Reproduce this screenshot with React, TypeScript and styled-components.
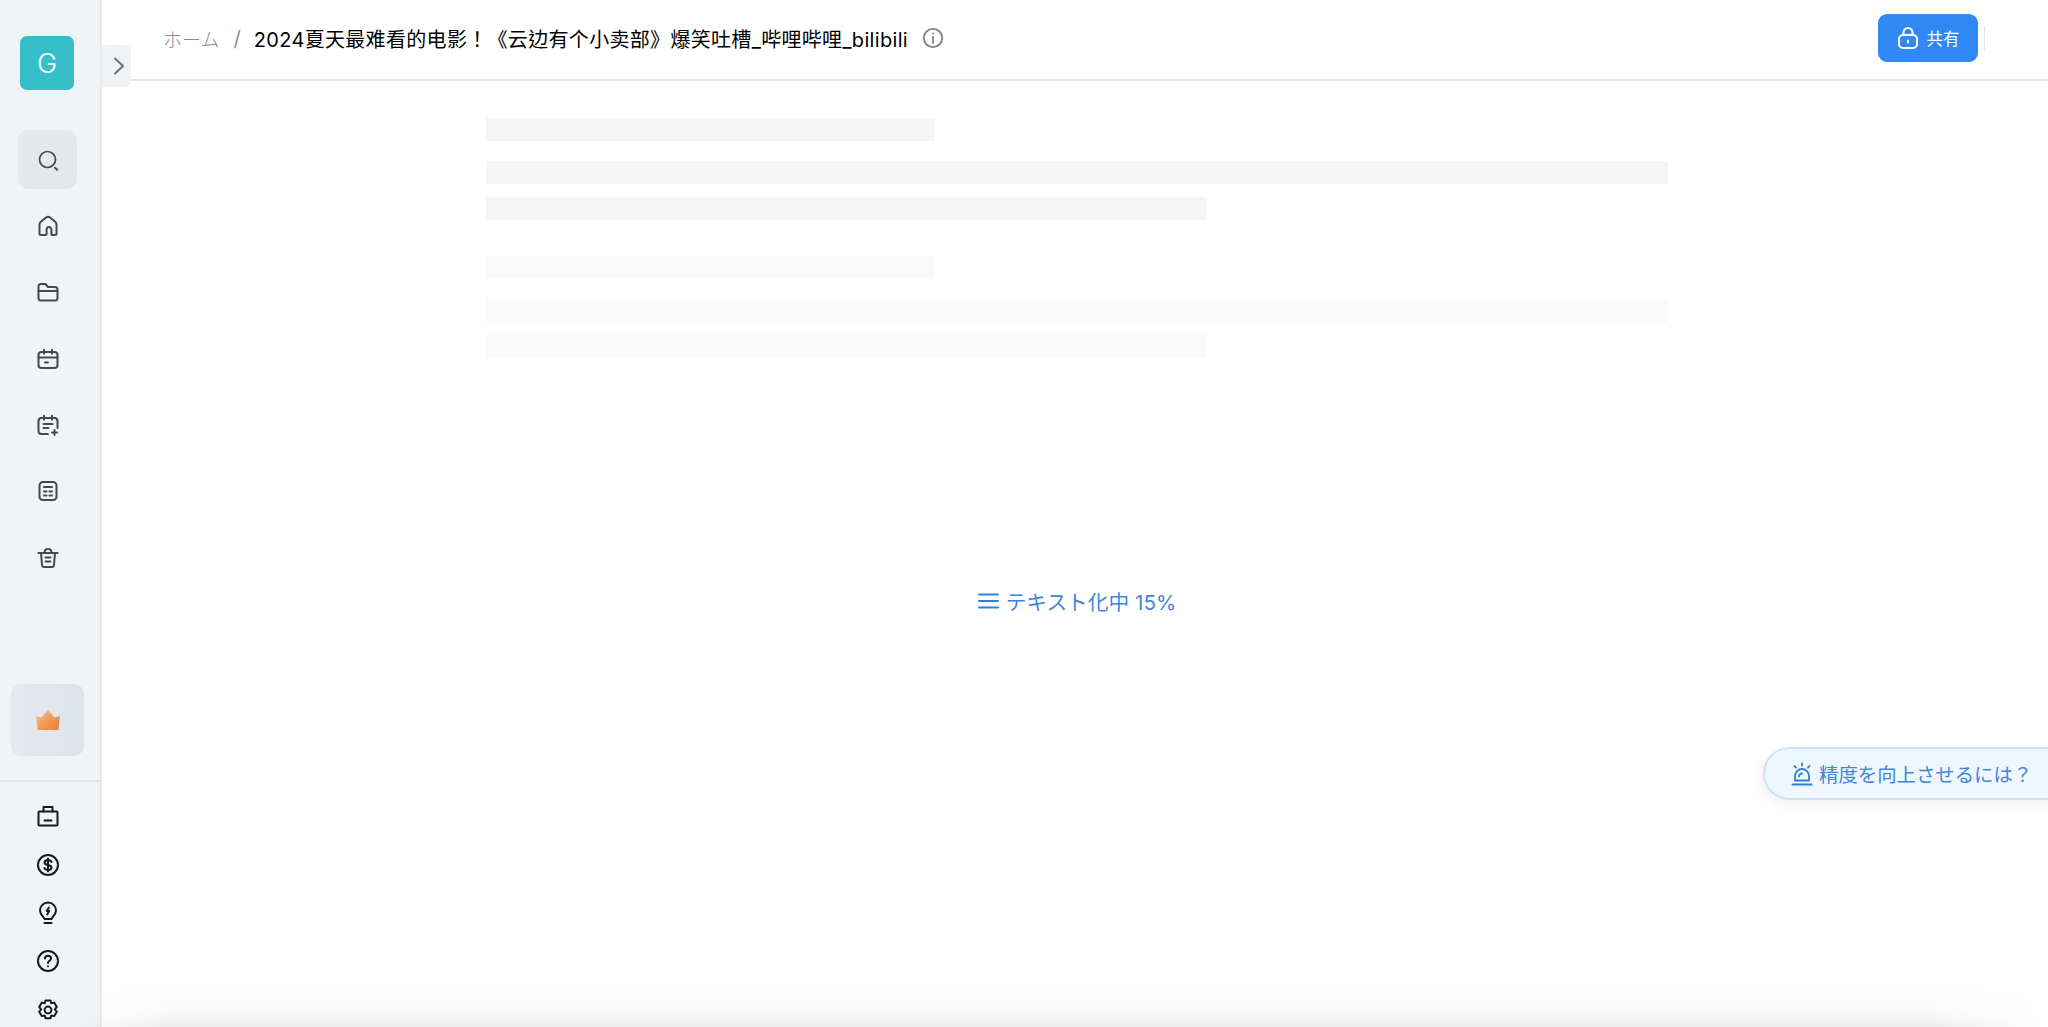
import styled, { createGlobalStyle } from 'styled-components'
import type { ReactNode } from 'react'

// ─── Icons ────────────────────────────────────────────────────────────────────

function NavIcon({ children, size = 24 }: { children: ReactNode; size?: number }) {
  return (
    <svg width={size} height={size} viewBox="0 0 24 24" fill="none" stroke="currentColor" strokeWidth="2" strokeLinecap="round" strokeLinejoin="round">
      {children}
    </svg>
  )
}

const navIcons = [
  <><circle cx="11.5" cy="11.5" r="8" strokeWidth="1.7" /><path d="M19 19.800l2.200 1.900" /></>,
  <path d="M3.500 19.500V10.500c0-1.300.6-2.200 1.600-3l4.800-3.900c1.200-1 3-1 4.200 0l4.800 3.900c1 .8 1.600 1.700 1.600 3v9c0 1-.8 1.500-1.500 1.500h-2.500c-.7 0-1.100-.4-1.100-1.100v-3.900c0-1.700-1.100-3-2.400-3s-2.400 1.300-2.400 3v3.900c0 .7-.4 1.100-1.100 1.100H5c-.7 0-1.500-.5-1.500-1.500z" />,
  <><path d="M2.500 18V6.500C2.500 5 3.500 4 5 4h4.500l2.500 3h7c1.500 0 2.500 1 2.500 2.500V18c0 1.500-1 2.500-2.500 2.500H5c-1.500 0-2.500-1-2.500-2.500z" /><path d="M2.500 11h19" /></>,
  <><rect x="2.500" y="5" width="19" height="16" rx="3" /><path d="M2.500 10.500h19M8 2.800v4M16 2.800v4M9 15.500h3" /></>,
  <><path d="M12 21H5.500c-1.700 0-3-1.300-3-3V8c0-1.700 1.300-3 3-3h13c1.700 0 3 1.300 3 3v7" /><path d="M8 2.800v4M16 2.800v4M7.500 11h9M7.500 15h5M18.500 17v5M16 19.500h5" /></>,
  <><rect x="3.500" y="3" width="17" height="18" rx="3.500" /><path d="M8 8h8M8 12.500h2.500M13.500 12.500H16M8 16.500h2.500M13.500 16.500H16" /></>,
  <><path d="M2.500 7h19M8.500 7c0-2.500 1.500-4 3.500-4s3.500 1.500 3.500 4" /><path d="M5 7l1 12c.1 1.300 1 2 2.200 2h7.600c1.200 0 2.100-.7 2.200-2l1-12" /><path d="M9.500 11.500h5M9.500 15.500h5" /></>,
]

const toolIcons = [
  <><rect x="2.500" y="7.500" width="19" height="14" rx="1" /><path d="M7.500 7.500V3h9v4.500M8.500 16.500h7" /></>,
  <><circle cx="12" cy="12" r="10" /><path d="M15.500 9c-.4-1.200-1.800-2-3.500-2-2 0-3.500 1-3.500 2.500 0 3.500 7 1.500 7 5 0 1.500-1.500 2.500-3.500 2.500-1.700 0-3.100-.8-3.500-2M12 5.500v13" /></>,
  <><path d="M8.500 18c0-1.800-4.500-3.500-4.500-8.500a8 8 0 0 1 16 0c0 5-4.500 6.700-4.500 8.500z" /><path d="M8.500 22h7M12.800 6.500l-2 3.500h2.400l-2 3.500" /></>,
  <><circle cx="12" cy="12" r="10" /><path d="M9 9.500C9 7.800 10.300 6.800 12 6.800s3 1.100 3 2.600c0 2.400-3 2.400-3 4.600M12 17.200v.1" /></>,
  <><path d="M9.500 2.500h5l.8 2.800 2.900-.7 2.600 4.400-2 2.300 2 2.400-2.600 4.400-2.900-.7-.8 2.800h-5l-.8-2.800-2.900.7-2.600-4.400 2-2.400-2-2.300 2.600-4.400 2.900.7z" /><circle cx="12" cy="12" r="3.400" /></>,
]

// ─── Component ────────────────────────────────────────────────────────────────

const skeletonGroups = [
  { faded: false },
  { faded: true },
]

export default function App() {
  return (
    <Page>
      <GlobalStyle />
      <Sidebar>
        <Avatar>G</Avatar>
        <NavList>
          {navIcons.map((icon, i) => (
            <NavButton key={i} $active={i === 0}>
              <NavIcon>{icon}</NavIcon>
            </NavButton>
          ))}
        </NavList>
        <PremiumButton>
          <svg width="26" height="22" viewBox="0 0 26 22">
            <defs>
              <linearGradient id="crown" x1="0" y1="0" x2="1" y2="1">
                <stop offset="0" stopColor="#f8bd8c" />
                <stop offset="1" stopColor="#ec7a26" />
              </linearGradient>
            </defs>
            <path d="M1 7l5.500 1.500L13 1l6.500 7.500L25 7l-1.500 13c-.1.700-.6 1-1.200 1H3.700c-.6 0-1.100-.3-1.200-1z" fill="url(#crown)" />
          </svg>
        </PremiumButton>
        <SidebarDivider />
        {toolIcons.map((icon, i) => (
          <ToolButton key={i}>
            <NavIcon>{icon}</NavIcon>
          </ToolButton>
        ))}
      </Sidebar>

      <Main>
        <CollapseTab>
          <svg width="14" height="20" viewBox="0 0 14 20" fill="none" stroke="#6f7378" strokeWidth="2" strokeLinecap="round" strokeLinejoin="round">
            <path d="M3 2.500l8 7.500-8 7.500" />
          </svg>
        </CollapseTab>

        <Header>
          <Breadcrumb>
            <HomeLink>ホーム</HomeLink>
            <Slash>/</Slash>
            <Title>2024夏天最难看的电影！《云边有个小卖部》爆笑吐槽_哔哩哔哩_bilibili</Title>
            <InfoIcon>
              <svg width="22" height="22" viewBox="0 0 22 22" fill="none" stroke="#7d8084" strokeWidth="1.800" strokeLinecap="round">
                <circle cx="11" cy="11" r="9.200" />
                <path d="M11 10v6M11 6.300v.4" />
              </svg>
            </InfoIcon>
          </Breadcrumb>
          <HeaderActions>
            <ShareButton>
              <svg width="22" height="24" viewBox="0 0 22 24" fill="none" stroke="#fff" strokeWidth="2" strokeLinecap="round">
                <rect x="2" y="9" width="18" height="13" rx="4" />
                <path d="M6.500 9V6.500a4.500 4.500 0 0 1 9 0V9M11 14.500v2" />
              </svg>
              共有
            </ShareButton>
            <ActionDivider />
          </HeaderActions>
        </Header>

        <Content>
          <SkeletonColumn>
            {skeletonGroups.map((group, i) => (
              <SkeletonGroup key={i} $faded={group.faded}>
                <SkeletonHeading />
                <SkeletonBody>
                  <SkeletonLine />
                  <SkeletonShortLine />
                </SkeletonBody>
              </SkeletonGroup>
            ))}
          </SkeletonColumn>
          <Status>
            <svg width="21" height="18" viewBox="0 0 21 18" fill="none" stroke="#2f80e4" strokeWidth="2" strokeLinecap="round">
              <path d="M1 2.500h19M1 9h19M1 15.500h19" />
            </svg>
            テキスト化中 15%
          </Status>
        </Content>

        <AccuracyPill>
          <svg width="22" height="24" viewBox="0 0 22 24" fill="none" stroke="#2f7dd6" strokeWidth="1.800" strokeLinecap="round">
            <path d="M4 18.500V14a7 7 0 0 1 14 0v4.500zM1.500 22.500h19M11 1.500v2M3.500 4l1.500 1.700M18.500 4L17 5.700M8 14.500a3 3 0 0 1 3-3" />
          </svg>
          精度を向上させるには？
        </AccuracyPill>
        <BottomShade />
      </Main>
    </Page>
  )
}

// ─── Styles ───────────────────────────────────────────────────────────────────

const GlobalStyle = createGlobalStyle`
  html, body {
    margin: 0;
    padding: 0;
    background: #fff;
    overflow: hidden;
  }

  * {
    box-sizing: border-box;
  }
`

const Page = styled.div`
  display: flex;
  width: 100vw;
  height: 100vh;
  overflow: hidden;
  font-family: Inter, "Noto Sans CJK JP", sans-serif;
`

const Sidebar = styled.aside`
  flex: 0 0 102px;
  display: flex;
  flex-direction: column;
  align-items: center;
  height: 100%;
  padding: 36px 5px 0 0;
  overflow: hidden;
  background: #f0f4f6;
  border-right: 2px solid #e6e9eb;
`

const Avatar = styled.div`
  display: flex;
  align-items: center;
  justify-content: center;
  flex: 0 0 54px;
  width: 54px;
  margin-left: -1px;
  border-radius: 7px;
  background: #36bfc9;
  color: #fff;
  font-size: 27px;
  font-weight: 300;
`

const NavList = styled.nav`
  display: flex;
  flex-direction: column;
  align-items: center;
  gap: 7.4px;
  margin-top: 40px;
`

const NavButton = styled.div<{ $active?: boolean }>`
  display: flex;
  align-items: center;
  justify-content: center;
  width: 59px;
  height: 59px;
  border-radius: 10px;
  background: ${({ $active }) => ($active ? '#e5e8eb' : 'transparent')};
  color: #45484d;
`

const PremiumButton = styled.div`
  display: flex;
  align-items: center;
  justify-content: center;
  flex: 0 0 72px;
  width: 73px;
  margin-top: 97px;
  border-radius: 10px;
  background: linear-gradient(90deg, #e6e9ee, #dfe3ec);
`

const SidebarDivider = styled.div`
  flex: 0 0 2px;
  align-self: stretch;
  margin: 24px -5px 10px 0;
  background: #e2e5e7;
`

const ToolButton = styled.div`
  display: flex;
  align-items: center;
  justify-content: center;
  flex: 0 0 48.3px;
  width: 48px;
  color: #17191c;
`

const Main = styled.main`
  position: relative;
  flex: 1;
  display: flex;
  flex-direction: column;
  min-width: 0;
`

const CollapseTab = styled.div`
  position: absolute;
  top: 45px;
  left: 0;
  z-index: 2;
  display: flex;
  align-items: center;
  justify-content: center;
  width: 29px;
  height: 42px;
  padding-left: 5px;
  border-radius: 0 6px 6px 0;
  background: #f0f3f5;
`

const Header = styled.header`
  flex: 0 0 81px;
  display: flex;
  align-items: center;
  justify-content: space-between;
  padding: 0 63px 3px 61px;
  border-bottom: 2px solid #e6e7e8;
`

const Breadcrumb = styled.div`
  display: flex;
  align-items: center;
`

const HomeLink = styled.span`
  color: #8a8a8a;
  font-size: 19px;
  font-weight: 300;
`

const Slash = styled.span`
  margin: 0 13px 0 14px;
  color: #777;
  font-size: 21px;
  font-weight: 300;
`

const Title = styled.h1`
  margin: 0;
  color: #000;
  font-family: Inter, "Noto Sans CJK TC", "Noto Sans CJK SC", sans-serif;
  font-size: 20px;
  font-weight: 400;
  letter-spacing: 0.32px;
  white-space: nowrap;
`

const InfoIcon = styled.span`
  display: flex;
  margin-left: 14px;
`

const HeaderActions = styled.div`
  display: flex;
  align-items: center;
  gap: 6px;
`

const ShareButton = styled.button`
  display: flex;
  align-items: center;
  justify-content: center;
  gap: 8px;
  width: 100px;
  height: 48px;
  border: 0;
  border-radius: 9px;
  background: #2f88f3;
  color: #fff;
  font-family: "Noto Sans CJK JP", sans-serif;
  font-size: 16.5px;
  font-weight: 400;
`

const ActionDivider = styled.span`
  width: 1px;
  height: 24px;
  background: #e6e7e8;
`

const Content = styled.section`
  flex: 1;
  display: flex;
  flex-direction: column;
  align-items: center;
  padding: 37px 0 0 4px;
`

const SkeletonColumn = styled.div`
  display: flex;
  flex-direction: column;
  gap: 36px;
  width: 1182px;
`

const SkeletonGroup = styled.div<{ $faded?: boolean }>`
  display: flex;
  flex-direction: column;
  gap: 20px;
  color: ${({ $faded }) => ($faded ? '#fafafa' : '#f5f5f5')};
`

const SkeletonBody = styled.div`
  display: flex;
  flex-direction: column;
  gap: 13px;
`

const SkeletonLine = styled.div`
  width: 100%;
  height: 23px;
  background: currentColor;
`

const SkeletonHeading = styled(SkeletonLine)`
  width: 449px;
`

const SkeletonShortLine = styled(SkeletonLine)`
  width: 721px;
`

const Status = styled.div`
  display: flex;
  align-items: center;
  gap: 7px;
  margin-top: 228px;
  color: #3f86db;
  font-size: 20.7px;
  font-weight: 400;
`

const AccuracyPill = styled.div`
  position: absolute;
  top: 747px;
  right: -20px;
  display: flex;
  align-items: center;
  gap: 6px;
  width: 305px;
  height: 53px;
  padding-left: 26px;
  border: 2px solid #cfe2f5;
  border-radius: 27px 0 0 27px;
  background: #eff7fe;
  box-shadow: -4px 4px 12px rgba(0, 0, 0, 0.05);
  color: #3f86db;
  font-size: 19.4px;
  font-weight: 400;
  white-space: nowrap;
`

const BottomShade = styled.div`
  position: absolute;
  left: -30px;
  right: 5px;
  bottom: 0;
  height: 46px;
  background: linear-gradient(
    180deg,
    rgba(0, 0, 0, 0) 0%,
    rgba(0, 0, 0, 0.012) 40%,
    rgba(0, 0, 0, 0.025) 70%,
    rgba(0, 0, 0, 0.05) 88%,
    rgba(0, 0, 0, 0.08) 100%
  );
  mask-image: linear-gradient(90deg, transparent, #000 100px, #000 calc(100% - 120px), transparent);
  pointer-events: none;
`
